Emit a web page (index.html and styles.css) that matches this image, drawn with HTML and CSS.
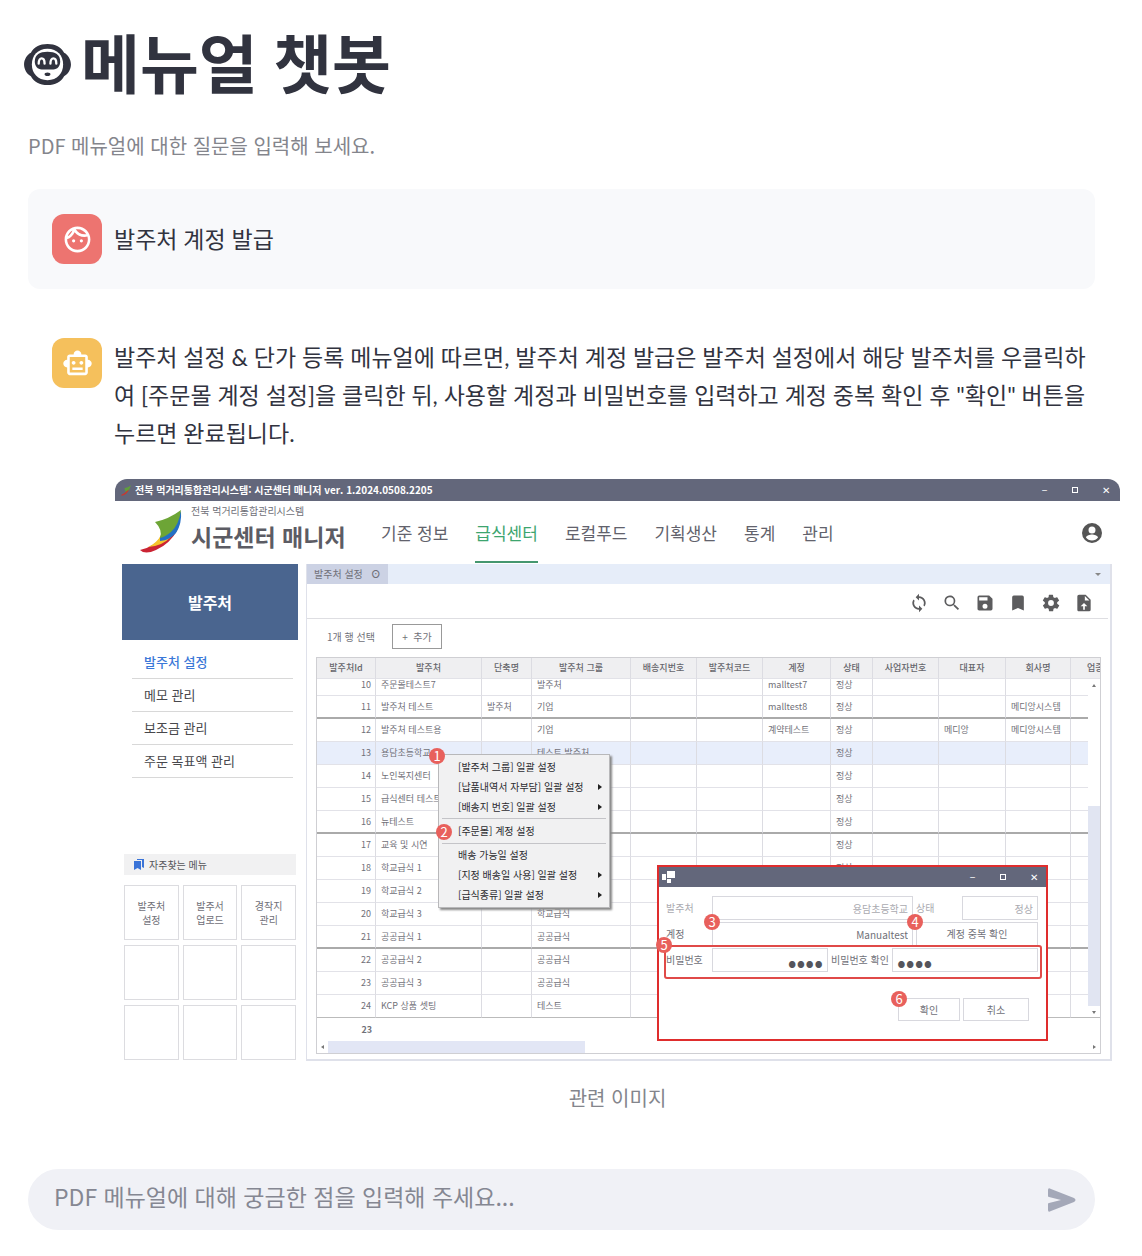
FILE: index.html
```html
<!DOCTYPE html>
<html lang="ko">
<head>
<meta charset="utf-8">
<meta name="viewport" content="width=device-width, initial-scale=1">
<title>메뉴얼 챗봇</title>
<link rel="stylesheet" href="styles.css">
</head>
<body>
<main class="page">
  <h1 class="title">
    <svg class="title-icon" viewBox="0 0 48 44" aria-hidden="true">
      <path fill="#31333f" d="M24 1C32 1 38 4 41 10C45 12 48 17 48 22S45 32 41 34C38 40 32 43 24 43S10 40 7 34C3 32 0 27 0 22S3 12 7 10C10 4 16 1 24 1Z"/>
      <path fill="#fff" d="M24 6C34 6 40 13 40 22S34 38 24 38S8 31 8 22S14 6 24 6Z"/>
      <path fill="#31333f" d="M24 9C32 9 37 12 37 19C37 24 34 27 30 27H18C14 27 11 24 11 19C11 12 16 9 24 9Z"/>
      <path fill="none" stroke="#fff" stroke-width="2.4" stroke-linecap="round" d="M15 21C15 14 21 14 21 21M27 21C27 14 33 14 33 21"/>
      <ellipse cx="24" cy="32" rx="3" ry="1.8" fill="#31333f"/>
    </svg>
    <span>메뉴얼 챗봇</span>
  </h1>
  <p class="subtitle">PDF 메뉴얼에 대한 질문을 입력해 보세요.</p>

  <section class="message message-user">
    <span class="avatar avatar-user">
      <svg viewBox="0 0 24 24" width="31" height="31" aria-hidden="true"><path fill="#fff" d="M10.250 13a1.250 1.250 0 1 1-2.500 0 1.250 1.250 0 0 1 2.500 0zM15 11.750a1.250 1.250 0 1 0 0 2.500 1.250 1.250 0 0 0 0-2.500zM22 12c0 5.520-4.480 10-10 10S2 17.520 2 12 6.480 2 12 2s10 4.480 10 10zM10.660 4.120C12.060 6.440 14.600 8 17.500 8c.460 0 .910-.050 1.340-.120C17.440 5.560 14.900 4 12 4c-.460 0-.910.050-1.340.120zM4.420 9.470c1.710-.970 3.030-2.550 3.660-4.440C6.370 6 5.050 7.580 4.420 9.470zM20 12c0-.780-.120-1.530-.330-2.240-.700.150-1.420.240-2.170.240-3.130 0-5.920-1.440-7.760-3.690C8.690 8.870 6.600 10.880 4 11.860c.010.040 0 .090 0 .140 0 4.410 3.590 8 8 8s8-3.590 8-8z"/></svg>
    </span>
    <p class="message-text">발주처 계정 발급</p>
  </section>

  <section class="message message-bot">
    <span class="avatar avatar-bot">
      <svg viewBox="0 0 24 24" width="31" height="31" aria-hidden="true"><path fill="#fff" d="M20 9V7c0-1.100-.900-2-2-2h-3c0-1.660-1.340-3-3-3S9 3.340 9 5H6c-1.100 0-2 .900-2 2v2c-1.660 0-3 1.340-3 3s1.340 3 3 3v4c0 1.100.900 2 2 2h12c1.100 0 2-.900 2-2v-4c1.660 0 3-1.340 3-3s-1.340-3-3-3zm-2 10H6V7h12v12zm-9-6c-.830 0-1.500-.670-1.500-1.500S8.170 10 9 10s1.500.670 1.500 1.500S9.830 13 9 13zm7.500-1.500c0 .830-.670 1.500-1.500 1.500s-1.500-.670-1.500-1.500.670-1.500 1.500-1.500 1.500.670 1.500 1.500zM8 15h8v2H8v-2z"/></svg>
    </span>
    <div class="message-body">
      <p class="message-text">발주처 설정 &amp; 단가 등록 메뉴얼에 따르면, 발주처 계정 발급은 발주처 설정에서 해당 발주처를 우클릭하여 [주문몰 계정 설정]을 클릭한 뒤, 사용할 계정과 비밀번호를 입력하고 계정 중복 확인 후 "확인" 버튼을 누르면 완료됩니다.</p>
      <figure class="figure">
        <div class="app">
          <div class="app-bar">
            <svg width="10" height="11" viewBox="0 0 42 44" aria-hidden="true"><path fill="#5f9e3c" d="M14 13Q28 11 42 0Q36 22 22 34Z"/><path fill="#c8392f" d="M0 41Q16 36 24 24L34 18Q24 40 4 44Z"/></svg>
            <strong>전북 먹거리통합관리시스템: 시군센터 매니저 ver. 1.2024.0508.2205</strong>
            <span class="window-controls"><i>−</i><i class="square"></i><i>✕</i></span>
          </div>
          <header class="app-header">
            <svg class="logo" viewBox="0 0 42 44" width="42" height="44" aria-hidden="true">
              <path fill="#cb2433" d="M0 40Q14 37 21 27L38 19Q30 34 16 40Q5 45 0 40Z"/>
              <path fill="#f5c52c" d="M8 37Q17 33 21 25L40 14Q32 29 21 34Q14 37 8 37Z"/>
              <path fill="#2370c5" d="M20 27Q32 20 41 1Q42 14 36 23Q30 30 20 31Z"/>
              <path fill="#6da536" d="M15 12Q29 9 41 0Q39 15 31 22Q25 27 20 28Q23 20 15 12Z"/>
            </svg>
            <div class="brand"><small>전북 먹거리통합관리시스템</small><strong>시군센터 매니저</strong></div>
            <nav class="nav">
              <a href="#">기준 정보</a><a href="#" class="active">급식센터</a><a href="#">로컬푸드</a><a href="#">기획생산</a><a href="#">통계</a><a href="#">관리</a>
            </nav>
            <svg class="account" viewBox="2 2 20 20" width="20" height="20" aria-hidden="true"><path fill="#555" d="M12 2a10 10 0 1 0 0 20 10 10 0 0 0 0-20zm0 3.500a3.500 3.500 0 1 1 0 7 3.500 3.500 0 0 1 0-7zm0 14c-2.500 0-4.700-1.200-6-3 .1-2 4-3 6-3s5.900 1 6 3c-1.300 1.800-3.500 3-6 3z"/></svg>
          </header>
          <div class="app-main">
            <aside class="side">
              <h2>발주처</h2>
              <ul class="side-menu">
                <li><a href="#" class="active">발주처 설정</a></li>
                <li><a href="#">메모 관리</a></li>
                <li><a href="#">보조금 관리</a></li>
                <li><a href="#">주문 목표액 관리</a></li>
              </ul>
              <h3><svg width="10" height="11" viewBox="0 0 10 11" aria-hidden="true"><path fill="#3b74d8" d="M0 2H7V11L3.500 9L0 11Z"/><path fill="#3b74d8" d="M3 0H10V9L8 8V1H3Z"/></svg>자주찾는 메뉴</h3>
              <div class="tiles">
                <button type="button">발주처<br>설정</button><button type="button">발주서<br>업로드</button><button type="button">경작지<br>관리</button>
                <span></span><span></span><span></span><span></span><span></span><span></span>
              </div>
            </aside>
            <section class="panel">
              <div class="tabs"><span class="tab">발주처 설정 <b>⊙</b></span><span class="caret-down"></span></div>
              <div class="tools">
                <svg viewBox="0 0 24 24" aria-hidden="true"><path d="M12 4V1L8 5l4 4V6a6 6 0 0 1 5.200 8.800l1.500 1.500A8 8 0 0 0 12 4zm0 14a6 6 0 0 1-5.200-8.800L5.300 7.700A8 8 0 0 0 12 20v3l4-4-4-4z"/></svg>
                <svg viewBox="0 0 24 24" aria-hidden="true"><path d="M15.500 14h-.8l-.3-.3A6.500 6.500 0 1 0 13.700 14.400l.3.300v.8l5 5 1.500-1.500zm-6 0a4.500 4.500 0 1 1 0-9 4.500 4.500 0 0 1 0 9z"/></svg>
                <svg viewBox="0 0 24 24" aria-hidden="true"><path d="M17 3H5a2 2 0 0 0-2 2v14c0 1.100.9 2 2 2h14a2 2 0 0 0 2-2V7zm-5 16a3 3 0 1 1 0-6 3 3 0 0 1 0 6zm3-10H5V5h10z"/></svg>
                <svg viewBox="0 0 24 24" aria-hidden="true"><path d="M17 3H7a2 2 0 0 0-2 2v16l7-3 7 3V5a2 2 0 0 0-2-2z"/></svg>
                <svg viewBox="0 0 24 24" aria-hidden="true"><path d="M19.400 13a7.500 7.500 0 0 0 0-2l2.100-1.600c.2-.2.200-.4.100-.6l-2-3.500c-.1-.2-.4-.3-.6-.2l-2.500 1a7 7 0 0 0-1.700-1l-.4-2.600a.5.500 0 0 0-.5-.4h-4a.5.500 0 0 0-.5.400L9.100 5.100a7 7 0 0 0-1.700 1l-2.500-1c-.2-.1-.5 0-.6.200l-2 3.500c-.1.200-.1.500.1.600L4.600 11a7.500 7.500 0 0 0 0 2l-2.100 1.600c-.2.200-.2.400-.1.600l2 3.500c.1.200.4.300.6.200l2.500-1a7 7 0 0 0 1.700 1l.4 2.600c0 .2.200.4.500.4h4c.2 0 .5-.2.500-.4l.4-2.600a7 7 0 0 0 1.700-1l2.500 1c.2.100.5 0 .6-.2l2-3.500c.1-.2.100-.5-.1-.6zM12 15.500a3.500 3.500 0 1 1 0-7 3.500 3.500 0 0 1 0 7z"/></svg>
                <svg viewBox="0 0 24 24" aria-hidden="true"><path d="M14 2H6a2 2 0 0 0-2 2v16c0 1.100.9 2 2 2h12a2 2 0 0 0 2-2V8zm-1 14v4h-2v-4H8l4-4 4 4zm0-7V3.500L18.500 9z"/></svg>
              </div>
              <div class="grid-actions"><span>1개 행 선택</span><button type="button">+&nbsp; 추가</button></div>
              <div class="grid">
                <table>
                  <colgroup><col class="w59"><col class="w106"><col class="w50"><col class="w99"><col class="w66"><col class="w66"><col class="w68"><col class="w42"><col class="w66"><col class="w67"><col class="w65"><col></colgroup>
                  <thead><tr><th>발주처Id</th><th>발주처</th><th>단축명</th><th>발주처 그룹</th><th>배송지번호</th><th>발주처코드</th><th>계정</th><th>상태</th><th>사업자번호</th><th>대표자</th><th>회사명</th><th>업종</th></tr></thead>
                  <tbody>
                    <tr class="cut"><td>10</td><td>주문몰테스트7</td><td></td><td>발주처</td><td></td><td></td><td>malltest7</td><td>정상</td><td></td><td></td><td></td><td></td></tr>
                    <tr class="thick"><td>11</td><td>발주처 테스트</td><td>발주처</td><td>기업</td><td></td><td></td><td>malltest8</td><td>정상</td><td></td><td></td><td>메디앙시스템</td><td></td></tr>
                    <tr><td>12</td><td>발주처 테스트용</td><td></td><td>기업</td><td></td><td></td><td>계약테스트</td><td>정상</td><td></td><td>메디앙</td><td>메디앙시스템</td><td></td></tr>
                    <tr class="selected"><td>13</td><td>용담초등학교</td><td></td><td>테스트 발주처</td><td></td><td></td><td></td><td>정상</td><td></td><td></td><td></td><td></td></tr>
                    <tr><td>14</td><td>노인복지센터</td><td></td><td></td><td></td><td></td><td></td><td>정상</td><td></td><td></td><td></td><td></td></tr>
                    <tr><td>15</td><td>급식센터 테스트</td><td></td><td></td><td></td><td></td><td></td><td>정상</td><td></td><td></td><td></td><td></td></tr>
                    <tr class="thick"><td>16</td><td>뉴테스트</td><td></td><td></td><td></td><td></td><td></td><td>정상</td><td></td><td></td><td></td><td></td></tr>
                    <tr><td>17</td><td>교육 및 시연</td><td></td><td></td><td></td><td></td><td></td><td>정상</td><td></td><td></td><td></td><td></td></tr>
                    <tr><td>18</td><td>학교급식 1</td><td></td><td></td><td></td><td></td><td></td><td>정상</td><td></td><td></td><td></td><td></td></tr>
                    <tr><td>19</td><td>학교급식 2</td><td></td><td></td><td></td><td></td><td></td><td></td><td></td><td></td><td></td><td></td></tr>
                    <tr><td>20</td><td>학교급식 3</td><td></td><td>학교급식</td><td></td><td></td><td></td><td></td><td></td><td></td><td></td><td></td></tr>
                    <tr class="thick"><td>21</td><td>공공급식 1</td><td></td><td>공공급식</td><td></td><td></td><td></td><td></td><td></td><td></td><td></td><td></td></tr>
                    <tr><td>22</td><td>공공급식 2</td><td></td><td>공공급식</td><td></td><td></td><td></td><td></td><td></td><td></td><td></td><td></td></tr>
                    <tr><td>23</td><td>공공급식 3</td><td></td><td>공공급식</td><td></td><td></td><td></td><td></td><td></td><td></td><td></td><td></td></tr>
                    <tr class="last"><td>24</td><td>KCP 상품 셋팅</td><td></td><td>테스트</td><td></td><td></td><td></td><td></td><td></td><td></td><td></td><td></td></tr>
                  </tbody>
                  <tfoot><tr><td>23</td><td colspan="11"></td></tr></tfoot>
                </table>
                <div class="vscroll"><i class="up"></i><span></span><i class="down"></i></div>
                <div class="hscroll"><i class="left"></i><span></span><i class="right"></i></div>
              </div>
            </section>
          </div>

          <ul class="context-menu">
            <li>[발주처 그룹] 일괄 설정</li>
            <li class="more">[납품내역서 자부담] 일괄 설정</li>
            <li class="more">[배송지 번호] 일괄 설정</li>
            <li class="split">[주문몰] 계정 설정</li>
            <li>배송 가능일 설정</li>
            <li class="more">[지정 배송일 사용] 일괄 설정</li>
            <li class="more">[급식종류] 일괄 설정</li>
          </ul>

          <form class="dialog">
            <div class="dialog-bar">
              <svg width="13" height="12" viewBox="0 0 13 12" aria-hidden="true"><path fill="#fff" d="M0 3H4V9H0ZM5 0H13V7H5ZM5 8H9V12H5Z"/></svg>
              <span class="window-controls"><i>−</i><i class="square"></i><i>✕</i></span>
            </div>
            <div class="fields">
              <div class="field-row muted">
                <label for="client">발주처</label><input id="client" class="grow" value="용담초등학교">
                <label for="state" class="mid">상태</label><input id="state" class="w76" value="정상">
              </div>
              <div class="field-row">
                <label for="account">계정</label><input id="account" class="grow" value="Manualtest">
                <button type="button" class="w122">계정 중복 확인</button>
              </div>
              <div class="field-row">
                <label for="pw">비밀번호</label><input id="pw" type="password" class="grow" value="1234">
                <label for="pw2" class="wide">비밀번호 확인</label><input id="pw2" type="password" class="w146 start" value="1234">
              </div>
              <div class="buttons"><button type="button" class="w62">확인</button><button type="button" class="w66">취소</button></div>
            </div>
          </form>
          <span class="outline"></span>
          <b class="badge b1">1</b><b class="badge b2">2</b><b class="badge b3">3</b><b class="badge b4">4</b><b class="badge b5">5</b><b class="badge b6">6</b>
        </div>
        <figcaption>관련 이미지</figcaption>
      </figure>
    </div>
  </section>

  <form class="composer">
    <input type="text" aria-label="질문" placeholder="PDF 메뉴얼에 대해 궁금한 점을 입력해 주세요...">
    <button type="button" aria-label="보내기"><svg width="28" height="24" viewBox="0 0 28 24" aria-hidden="true"><path fill="#a4a8b8" d="M0 2Q0-1 3 1L26 10Q29 12 26 14L3 23Q0 25 0 22V16Q0 15 1 15L13 12L1 9Q0 9 0 8Z"/></svg></button>
  </form>
</main>
</body>
</html>
```

FILE: styles.css
```css
* { box-sizing: border-box; }
body {
  margin: 0;
  background: #fff;
  color: #31333f;
  font-family: "Noto Sans CJK KR", "Noto Sans", sans-serif;
}
h1, h2, h3, p, ul, figure { margin: 0; padding: 0; }
ul { list-style: none; }
a { color: inherit; text-decoration: none; }
i { font-style: normal; }
input, button {
  font: inherit;
  color: inherit;
  background: #fff;
  border: 1px solid #d8d8de;
  border-radius: 0;
  margin: 0;
  padding: 0;
  min-width: 0;
}

.page { padding: 24px 47px 26px 28px; }
.title {
  display: flex;
  align-items: center;
  gap: 10px;
  margin-left: -4px;
  font-family: Lato, "Noto Sans CJK KR", sans-serif;
  font-size: 64px;
  line-height: 80px;
  font-weight: 700;
}
.title-icon { width: 47px; height: 43px; }
.subtitle {
  margin-top: 27px;
  font-size: 20px;
  line-height: 30px;
  color: #84858c;
}

.message { display: flex; gap: 12px; padding: 25px 25px 25px 24px; }
.message-user {
  margin-top: 28px;
  align-items: center;
  background: #f8f9fb;
  border-radius: 12px;
}
.message-bot { margin-top: 24px; padding: 25px 0 0 24px; }
.message-body { flex: 1; min-width: 0; }
.message-text { font-family: Lato, "Noto Sans CJK KR", sans-serif; font-size: 23px; line-height: 38px; }
.avatar {
  flex: none;
  display: grid;
  place-items: center;
  width: 50px;
  height: 50px;
  border-radius: 12px;
}
.avatar-user { background: #ed7470; }
.avatar-bot { background: #f5c05c; }

.figure { margin: 27px -25px 0 1px; }
figcaption {
  margin-top: 22px;
  text-align: center;
  font-size: 20px;
  line-height: 30px;
  color: #84858c;
}

.app {
  position: relative;
  border-radius: 12px 12px 0 0;
  overflow: hidden;
  font-size: 10px;
  line-height: 14px;
  color: #707078;
}
.app-bar {
  display: flex;
  align-items: center;
  gap: 4px;
  height: 22px;
  padding: 0 8px 0 6px;
  background: #63677b;
  color: #fff;
}
.window-controls { display: flex; align-items: center; gap: 18px; margin-left: auto; }
.window-controls i { width: 13px; text-align: center; }
.window-controls .square { width: 6px; height: 6px; margin: 0 3px; border: 1px solid #fff; }

.app-header { display: flex; height: 63px; padding: 0 18px 0 25px; }
.logo { flex: none; margin-top: 9px; }
.brand { flex: none; display: flex; flex-direction: column; width: 199px; padding: 3px 0 0 9px; }
.brand small { font-size: 10px; line-height: 14px; }
.brand strong { font-size: 23px; line-height: 36px; font-weight: 700; color: #5c5c64; }
.nav { display: flex; gap: 27px; font-size: 17px; line-height: 64px; }
.nav a { height: 62px; color: #62626c; white-space: nowrap; }
.nav .active { color: #3da56f; box-shadow: inset 0 -2px #45976f; }
.account { margin: 22px 0 0 auto; }

.app-main { display: flex; gap: 8px; padding: 0 8px 0 7px; }
.side { flex: none; width: 176px; }
.side h2 {
  background: #4a658f;
  color: #fff;
  font-size: 16px;
  line-height: 76px;
  font-weight: 700;
  text-align: center;
}
.side-menu { padding: 6px 5px 0 10px; font-size: 13px; }
.side-menu li { border-bottom: 1px solid #d8d8d8; padding-left: 12px; line-height: 32px; color: #48484c; }
.side-menu .active { color: #3b78d8; font-weight: 500; }
.side h3 {
  display: flex;
  align-items: center;
  gap: 5px;
  margin: 76px 2px 10px;
  padding-left: 10px;
  height: 21px;
  background: #f1f1f2;
  font-size: 10px;
  font-weight: 400;
  color: #55555a;
}
.tiles { display: grid; grid-template-columns: repeat(3, 1fr); gap: 5px 4px; grid-auto-rows: 55px; padding: 0 2px; }
.tiles > * { border: 1px solid #dcdce0; }

.panel { flex: 1; min-width: 0; border: 1px solid #dfe1ea; border-width: 0 2px 2px 1px; }
.tabs { display: flex; align-items: center; justify-content: space-between; height: 20px; padding-right: 9px; background: #e6edf9; }
.tab { display: flex; gap: 8px; padding: 0 7px; line-height: 20px; background: #ccd2e4; }
.caret-down { border: 3px solid transparent; border-top-color: #888; border-bottom: 0; }
.tools {
  display: flex;
  align-items: center;
  justify-content: flex-end;
  gap: 13px;
  height: 35px;
  margin-right: 2px;
  padding: 4px 14px 0 0;
  border-bottom: 1px solid #dedee2;
}
.tools svg { width: 20px; height: 20px; fill: #5c5c5e; }
.grid-actions { display: flex; align-items: center; gap: 17px; padding: 5px 0 8px 20px; }
.grid-actions button { width: 50px; height: 25px; border-color: #999; }

.grid { position: relative; margin: 0 9px 5px; border: 1px solid #cfcfd3; overflow: hidden; }
table { width: 100%; table-layout: fixed; border-collapse: separate; border-spacing: 0; font-size: 9px; line-height: 12px; }
th, td { padding: 0 5px; border-right: 1px solid #dcdce2; border-bottom: 1px solid #e2e2e8; white-space: nowrap; overflow: hidden; text-align: left; }
th { height: 21px; padding: 0; background: #efeff1; text-align: center; font-weight: 500; color: #66666c; }
td { height: 23px; }
th:last-child, td:last-child { border-right: 0; }
th:last-child { padding-left: 16px; text-align: left; }
td:first-child { text-align: right; padding-right: 4px; }
.cut td { height: 16px; padding-bottom: 4px; }
.thick td { border-bottom: 2px solid #aaa; }
.selected td { background: #e8eefb; }
.last td { border-bottom-color: #bbb; }
tfoot td { height: 23px; border: 0; font-weight: 700; }
.w59 { width: 59px; } .w106 { width: 106px; } .w50 { width: 50px; } .w99 { width: 99px; }
.w66 { width: 66px; } .w68 { width: 68px; } .w42 { width: 42px; } .w67 { width: 67px; } .w65 { width: 65px; }
.vscroll {
  position: absolute;
  top: 21px;
  right: 0;
  bottom: 36px;
  width: 12px;
  display: flex;
  flex-direction: column;
  align-items: center;
  justify-content: space-between;
  padding: 5px 0 3px;
  background: #fff;
}
.vscroll span { width: 12px; height: 200px; margin: auto 0 5px; background: #e1e5f2; }
.vscroll i, .hscroll i { border: 2px solid transparent; }
.vscroll .up { border-bottom: 3px solid #777; border-top: 0; }
.vscroll .down { border-top: 3px solid #777; border-bottom: 0; }
.hscroll { display: flex; align-items: center; height: 12px; padding: 0 4px; }
.hscroll span { width: 257px; height: 12px; margin: 0 auto 0 4px; background: #e2e6f5; }
.hscroll .left { border-right: 3px solid #777; border-left: 0; }
.hscroll .right { border-left: 3px solid #777; border-right: 0; }

.context-menu {
  position: absolute;
  left: 323px;
  top: 275px;
  width: 172px;
  padding: 2px 3px;
  background: #f1f1f2;
  border: 1px solid #b8b8ba;
  box-shadow: 2px 2px 2px #888;
  color: #2c2c30;
}
.context-menu li { display: flex; align-items: center; justify-content: space-between; padding: 0 4px 0 16px; line-height: 20px; }
.context-menu .more::after { content: ""; border: 3px solid transparent; border-left: 4px solid #222; border-right: 0; }
.context-menu .split { margin: 1px 0; padding-top: 2px; padding-bottom: 2px; border: 1px solid #c4c4c8; border-width: 1px 0; }

.dialog { position: absolute; left: 542px; top: 386px; width: 391px; height: 176px; background: #fff; border: 2px solid #df2d2d; }
.dialog-bar { display: flex; align-items: center; height: 20px; padding: 0 6px 0 3px; background: #63677b; color: #fff; }
.fields { display: flex; flex-direction: column; gap: 2px; padding: 9px 8px 0 7px; }
.field-row { display: flex; align-items: center; gap: 3px; height: 24px; }
.field-row > * { height: 24px; line-height: 22px; }
.field-row label { width: 43px; line-height: 24px; white-space: nowrap; }
.field-row .mid { width: 43px; }
.field-row .wide { width: 58px; }
.field-row input { text-align: right; padding: 0 4px; }
.field-row .grow { flex: 1; }
.field-row input[type="password"] { color: #55555c; font-size: 26px; }
.field-row .start { text-align: left; }
.muted { color: #aaaab0; }
.w76 { width: 76px; } .w122 { width: 122px; } .w146 { width: 146px; } .w62 { width: 62px; }
.buttons { display: flex; justify-content: flex-end; gap: 3px; padding: 24px 9px 0 0; }
.buttons button { height: 23px; }
.outline { position: absolute; left: 549px; top: 466px; width: 378px; height: 34px; border: 2px solid #e04a48; border-radius: 3px; }
.badge {
  position: absolute;
  width: 16px;
  height: 16px;
  border-radius: 50%;
  background: #e8605c;
  color: #fff;
  font-size: 13px;
  line-height: 16px;
  font-weight: 400;
  text-align: center;
}
.b1 { left: 314px; top: 269px; }
.b2 { left: 321px; top: 345px; }
.b3 { left: 589px; top: 435px; }
.b4 { left: 792px; top: 435px; }
.b5 { left: 541px; top: 458px; }
.b6 { left: 776px; top: 512px; }

.composer {
  display: flex;
  align-items: center;
  height: 61px;
  margin-top: 56px;
  padding: 0 19px 0 26px;
  border-radius: 31px;
  background: #f0f1f6;
}
.composer input { flex: 1; height: 46px; padding-bottom: 8px; border: 0; outline: 0; background: none; font-size: 23px; line-height: 38px; }
.composer input::placeholder { color: #858792; opacity: 1; }
.composer button { display: flex; border: 0; background: none; }
```
